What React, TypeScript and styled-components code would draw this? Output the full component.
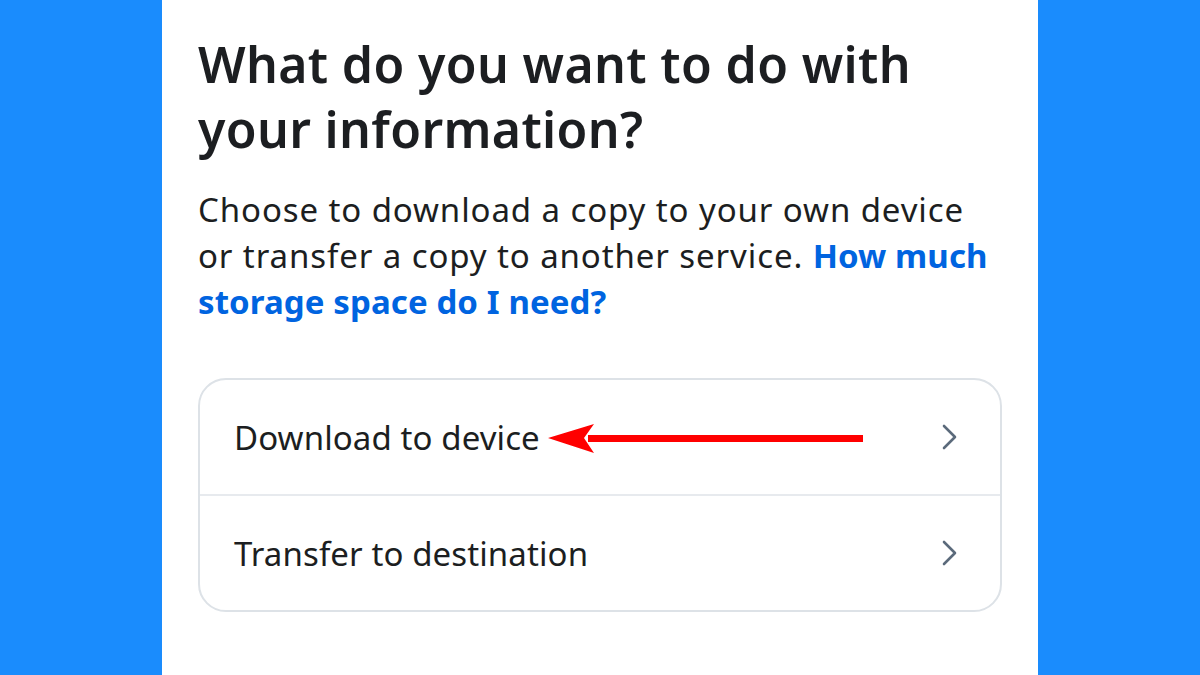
import React from "react";
import styled, { createGlobalStyle } from "styled-components";

const Global = createGlobalStyle`
  html, body { margin: 0; padding: 0; }
  body {
    background: #1a8cfd;
    font-family: "Noto Sans", "Open Sans", sans-serif;
    -webkit-font-smoothing: antialiased;
  }
`;

const Stage = styled.div`
  width: 1200px;
  height: 675px;
  overflow: hidden;
  display: flex;
  justify-content: center;
  background: #1a8cfd;
`;

const Panel = styled.main`
  width: 876px;
  height: 675px;
  background: #ffffff;
  box-sizing: border-box;
  padding: 32px 36px 0 36px;
  display: flex;
  flex-direction: column;
`;

const Title = styled.h1`
  margin: 0;
  font-size: 50px;
  line-height: 65px;
  font-weight: 600;
  color: #1c1e21;
  letter-spacing: 0.35px;
`;

const Lead = styled.p`
  margin: 25px 0 0 0;
  font-size: 33px;
  line-height: 46px;
  font-weight: 400;
  color: #1c1e21;
  letter-spacing: 0.9px;
`;

const Link = styled.a`
  color: #0064e0;
  font-weight: 700;
  text-decoration: none;
  letter-spacing: 0.1px;
`;

const Card = styled.div`
  margin-top: 53px;
  border: 2px solid #dde2e7;
  border-radius: 28px;
  display: flex;
  flex-direction: column;
  overflow: hidden;
`;

const Row = styled.div<{ $divider?: boolean }>`
  position: relative;
  height: 114px;
  display: flex;
  align-items: center;
  justify-content: space-between;
  padding: 0 40px 0 34px;
  border-top: ${(p) => (p.$divider ? "2px solid #e7eaee" : "none")};
`;

const RowLabel = styled.span`
  font-size: 33px;
  color: #1c1e21;
  font-weight: 400;
  letter-spacing: 0.1px;
`;

const Chevron = styled.svg`
  width: 20px;
  height: 28px;
  flex: none;
`;

const Arrow = styled.svg`
  position: absolute;
  left: 348px;
  top: 41px;
  width: 316px;
  height: 34px;
`;

const ChevronIcon = () => (
  <Chevron viewBox="0 0 20 28">
    <path
      d="M4 3 L15 14 L4 25"
      fill="none"
      stroke="#5b6a7b"
      strokeWidth="2.6"
      strokeLinecap="round"
      strokeLinejoin="round"
    />
  </Chevron>
);

export default function App() {
  return (
    <>
      <Global />
      <Stage>
        <Panel>
          <Title>
            What do you want to do with
            <br />
            your information?
          </Title>
          <Lead>
            Choose to download a copy to your own device
            <br />
            or transfer a copy to another service.{" "}
            <Link href="#">How much storage space do I need?</Link>
          </Lead>
          <Card>
            <Row>
              <RowLabel>Download to device</RowLabel>
              <ChevronIcon />
              <Arrow viewBox="0 0 316 34">
                <path d="M0 17 L46 3 L36 17 L46 32 Z" fill="#ff0000" />
                <rect x="40" y="14" width="275" height="7" fill="#ff0000" />
              </Arrow>
            </Row>
            <Row $divider>
              <RowLabel>Transfer to destination</RowLabel>
              <ChevronIcon />
            </Row>
          </Card>
        </Panel>
      </Stage>
    </>
  );
}
